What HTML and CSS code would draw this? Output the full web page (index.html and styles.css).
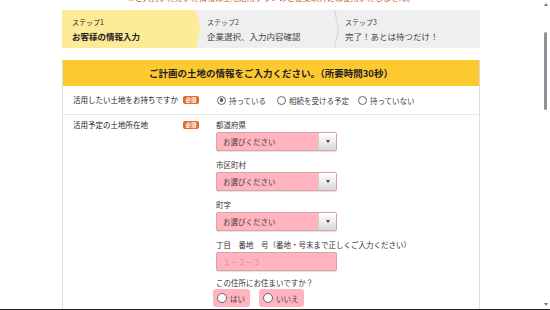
FILE: index.html
```html
<!DOCTYPE html>
<html lang="ja">
<head>
<meta charset="utf-8">
<title>土地情報入力</title>
<link rel="stylesheet" href="styles.css">
</head>
<body>
<div class="top-note"><span>※ご入力いただいた情報は土地活用プランのご提案以外には使用いたしません。</span></div>

<div class="steps">
  <div class="step step-active">
    <div class="step-num">ステップ1</div>
    <div class="step-title">お客様の情報入力</div>
  </div>
  <div class="step step-mid">
    <div class="step-num">ステップ2</div>
    <div class="step-title">企業選択、入力内容確認</div>
  </div>
  <div class="step">
    <div class="step-num">ステップ3</div>
    <div class="step-title">完了！あとは待つだけ！</div>
  </div>
</div>

<div class="card">
  <div class="card-head">ご計画の土地の情報をご入力ください。（所要時間30秒）</div>

  <div class="row row-own">
    <div class="row-label">活用したい土地をお持ちですか</div>
    <span class="req">必須</span>
    <div class="radios">
      <label class="radio"><span class="dot checked"></span>持っている</label>
      <label class="radio"><span class="dot"></span>相続を受ける予定</label>
      <label class="radio"><span class="dot"></span>持っていない</label>
    </div>
  </div>

  <div class="row row-addr">
    <div class="row-label">活用予定の土地所在地</div>
    <span class="req">必須</span>
    <div class="fields">
      <div class="f-label">都道府県</div>
      <div class="select"><span class="sel-text">お選びください</span><span class="sel-arrow"><i></i></span></div>
      <div class="f-label">市区町村</div>
      <div class="select"><span class="sel-text">お選びください</span><span class="sel-arrow"><i></i></span></div>
      <div class="f-label">町字</div>
      <div class="select"><span class="sel-text">お選びください</span><span class="sel-arrow"><i></i></span></div>
      <div class="f-label">丁目　番地　号（番地・号末まで正しくご入力ください）</div>
      <div class="input">１－２－３</div>
      <div class="f-label f-last">この住所にお住まいですか？</div>
      <div class="pills">
        <label class="pill"><span class="pdot"></span>はい</label>
        <label class="pill"><span class="pdot"></span>いいえ</label>
      </div>
    </div>
  </div>
</div>

<div class="scrollbar">
  <span class="sb-up"></span>
  <span class="sb-thumb"></span>
  <span class="sb-down"></span>
</div>
<div class="bottom-edge"></div>
</body>
</html>
```

FILE: styles.css
```css
* { box-sizing: border-box; }

html, body {
  margin: 0;
  padding: 0;
}

body {
  width: 550px;
  height: 310px;
  overflow: hidden;
  position: relative;
  background: #ffffff;
  color: #333333;
  font-family: "Noto Sans CJK JP", "Noto Sans", sans-serif;
  font-size: 8px;
}

.top-note {
  height: 4px;
  overflow: hidden;
  padding-left: 127px;
  white-space: nowrap;
}

.top-note span {
  display: block;
  margin-top: -7px;
  font-size: 8px;
  line-height: 10px;
  color: #c9532d;
}

/* steps */
.steps {
  margin: 6px 0 0 62px;
  width: 418px;
  height: 38px;
  display: flex;
  background: #efefef;
}

.step {
  position: relative;
  padding: 7px 0 0 10px;
  flex: 1;
  color: #444;
}

.step-active {
  flex: 0 0 138px;
  margin-right: -4px;
  background: #fdeb97;
  clip-path: polygon(0 0, 134px 0, 138px 50%, 134px 100%, 0 100%);
  z-index: 1;
  color: #222;
}

.step-mid {
  flex: 0 0 139px;
  padding-left: 11px;
}

.step-mid::before,
.step-mid::after {
  content: "";
  position: absolute;
  right: -2px;
  width: 1px;
  height: 50%;
  background: #d4d4d4;
}

.step-mid::before { top: 0; transform: skewX(12deg); }
.step-mid::after { bottom: 0; transform: skewX(-12deg); }

.step-num {
  font-size: 7px;
  line-height: 10px;
}

.step-title {
  margin-top: 3px;
  font-size: 8.5px;
  line-height: 12px;
}

.step-active .step-title { font-weight: bold; }

/* card */
.card {
  margin: 12px 0 0 62px;
  width: 418px;
  height: 260px;
  border-left: 1px solid #dddddd;
  border-right: 1px solid #dddddd;
}

.card-head {
  height: 26px;
  background: #fdc931;
  text-align: center;
  font-weight: bold;
  font-size: 9.5px;
  line-height: 26px;
  color: #222;
}

.row {
  display: flex;
  padding-left: 10px;
}

.row-own {
  height: 29px;
  align-items: center;
  border-bottom: 1px solid #e8e8e8;
}

.row-addr {
  padding-top: 5px;
  align-items: flex-start;
}

.row-label {
  width: 110px;
  font-size: 7.5px;
  line-height: 10px;
  color: #222;
}

.req {
  display: inline-block;
  width: 16px;
  height: 8px;
  border-radius: 2px;
  background: #e26a2c;
  color: #fff;
  font-size: 5.5px;
  line-height: 8px;
  text-align: center;
  font-weight: bold;
}

.row-addr .req { margin-top: 1px; }

.radios {
  display: flex;
  margin-left: 18px;
}

.radio {
  display: flex;
  align-items: center;
  font-size: 7.5px;
  color: #444;
  white-space: nowrap;
}

.radio:nth-child(1) { width: 60px; }
.radio:nth-child(2) { width: 81px; }

.dot {
  width: 9px;
  height: 9px;
  border: 1.3px solid #666;
  border-radius: 50%;
  margin-right: 3px;
  background: #fff;
  position: relative;
  flex: none;
}

.dot.checked::after {
  content: "";
  position: absolute;
  left: 1.5px;
  top: 1.5px;
  width: 3.5px;
  height: 3.5px;
  border-radius: 50%;
  background: #555;
}

/* fields */
.fields {
  margin-left: 17px;
  display: flex;
  flex-direction: column;
  align-items: flex-start;
}

.f-label {
  font-size: 7.5px;
  line-height: 10px;
  margin-top: 9px;
  margin-bottom: 2px;
  color: #333;
  white-space: nowrap;
}

.f-label:first-child { margin-top: 0; }
.f-last { margin-top: 7px; margin-bottom: 0; }

.select {
  width: 121px;
  height: 19px;
  display: flex;
  background: #ffb4bf;
  border: 1px solid #d6a3aa;
  border-radius: 2px;
  box-shadow: 0 1px 1px rgba(0,0,0,0.12);
}

.sel-text {
  flex: 1;
  padding-left: 6px;
  font-size: 7.5px;
  line-height: 17px;
  color: #444;
}

.sel-arrow {
  width: 18px;
  border-left: 1px solid #cfcfcf;
  background: linear-gradient(#ffffff, #d9d9d9);
  display: flex;
  align-items: center;
  justify-content: center;
}

.sel-arrow i {
  width: 0;
  height: 0;
  border-left: 2.5px solid transparent;
  border-right: 2.5px solid transparent;
  border-top: 3px solid #444;
}

.input {
  width: 121px;
  height: 19px;
  background: #ffb4bf;
  border: 1px solid #d6a3aa;
  border-radius: 2px;
  box-shadow: 0 1px 1px rgba(0,0,0,0.12);
  padding-left: 6px;
  font-size: 7.5px;
  line-height: 17px;
  color: #d98d98;
}

.pills {
  display: flex;
  gap: 9px;
  margin-left: -3px;
  margin-top: 1px;
}

.pill {
  height: 18px;
  display: flex;
  align-items: center;
  padding: 0 5px 0 4px;
  background: #ffb4bf;
  border-radius: 3px;
  font-size: 7.5px;
  color: #444;
  white-space: nowrap;
}

.pdot {
  width: 10px;
  height: 10px;
  border: 1.4px solid #666;
  border-radius: 50%;
  background: #fff;
  margin-right: 3px;
  flex: none;
}

/* fake scrollbar overlay */
.scrollbar {
  position: absolute;
  top: 0;
  right: 0;
  width: 8px;
  height: 310px;
}

.sb-up, .sb-down {
  position: absolute;
  left: 2px;
  width: 0;
  height: 0;
  border-left: 2px solid transparent;
  border-right: 2px solid transparent;
}

.sb-up { top: 3px; border-bottom: 3px solid #777; }
.sb-down { bottom: 4px; border-top: 3px solid #777; }

.sb-thumb {
  position: absolute;
  top: 32px;
  left: 2px;
  width: 3px;
  height: 78px;
  border-radius: 2px;
  background: #8d939b;
}

.bottom-edge {
  position: absolute;
  left: 0;
  bottom: 0;
  width: 550px;
  height: 1px;
  background: #222;
}
```
